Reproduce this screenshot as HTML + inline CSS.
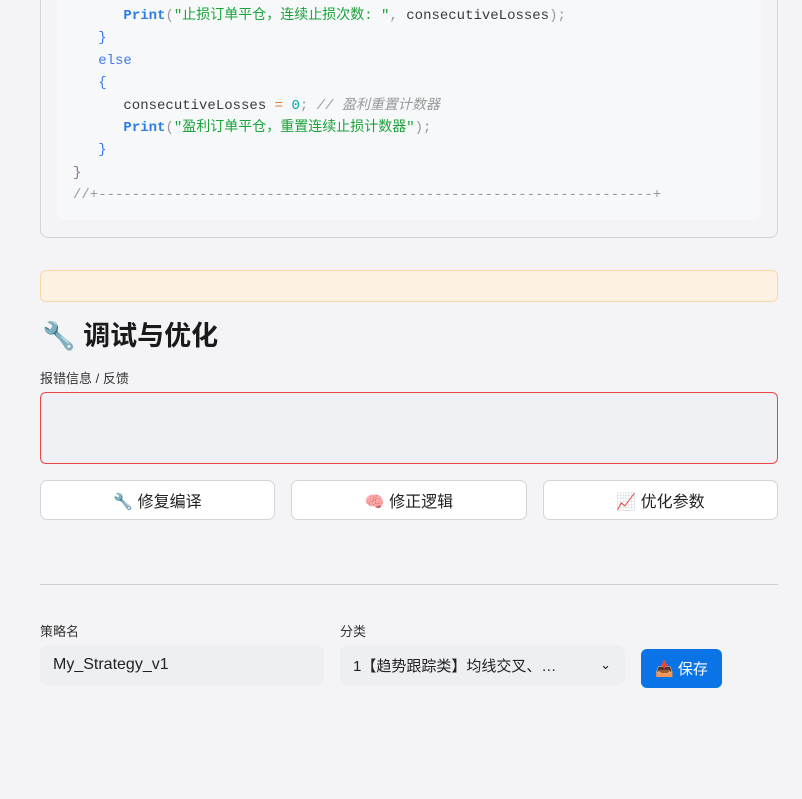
<!DOCTYPE html>
<html><head><meta charset="utf-8"><style>
body{margin:0;background:#f4f4f7;font-family:"Liberation Sans","Noto Sans CJK SC",sans-serif;color:#222;width:802px;height:799px;overflow:hidden;position:relative}
.card{position:absolute;left:40px;top:-20px;width:736px;height:257px;border:1px solid #d4d4d8;border-top:none;border-radius:0 0 8px 8px;background:#f4f4f6}
.pre{position:absolute;left:16px;top:0;width:704px;height:240px;background:#f6f8fa;border-radius:0 0 8px 8px}
.code{position:absolute;left:16px;margin:0;font-family:"Liberation Mono","Noto Sans CJK SC",monospace;font-size:14px;line-height:22.4px;color:#383a42;white-space:pre}
.k{color:#4078f2}.f{color:#2f7de1;font-weight:bold}.s{color:#1aa33a}.p{color:#999}.n{color:#0aa}.o{color:#e37b2b}.c{color:#999;font-style:italic}.b{color:#8a6d9a}
.warn{position:absolute;left:40px;top:270px;width:736px;height:30px;background:#fdf1e3;border:1px solid #f9d6a6;border-radius:6px}
h2{position:absolute;left:42px;top:314px;margin:0;font-size:27px;font-weight:bold;color:#1a1a1a}
.lbl{position:absolute;font-size:13px;color:#333}
.ta{position:absolute;left:40px;top:392px;width:736px;height:70px;background:#f0f1f5;border:1px solid #ef4444;border-radius:6px}
.btn{position:absolute;top:480px;height:38px;background:#fff;border:1px solid #d4d4d8;border-radius:7px;font-size:16px;display:flex;align-items:center;justify-content:center;color:#222}
.hr{position:absolute;left:40px;top:584px;width:738px;height:1px;background:#d0d0d4}
.inp{position:absolute;top:645px;height:40px;background:#eeeff3;border-radius:7px;font-size:16px;display:flex;align-items:center;box-sizing:border-box;padding-left:13px;color:#222}
.save{position:absolute;left:641px;top:649px;width:81px;height:39px;background:#0a74e6;border-radius:6px;color:#fff;font-size:15px;display:flex;align-items:center;justify-content:center}
</style></head><body>
<div class="card"><div class="pre">
<pre class="code" style="top:25px">      <span class="f">Print</span><span class="p">(</span><span class="s">"止损订单平仓，连续止损次数: "</span><span class="p">,</span> consecutiveLosses<span class="p">);</span>
   <span class="k">}</span>
   <span class="k">else</span>
   <span class="k">{</span>
      consecutiveLosses <span class="o">=</span> <span class="n">0</span><span class="p">;</span> <span class="c">// 盈利重置计数器</span>
      <span class="f">Print</span><span class="p">(</span><span class="s">"盈利订单平仓，重置连续止损计数器"</span><span class="p">);</span>
   <span class="k">}</span>
<span class="b">}</span>
<span class="p">//+------------------------------------------------------------------+</span></pre>
</div></div>
<div class="warn"></div>
<h2>🔧 调试与优化</h2>
<div class="lbl" style="left:40px;top:368px">报错信息 / 反馈</div>
<div class="ta"></div>
<div class="btn" style="left:40px;width:233px">🔧 修复编译</div>
<div class="btn" style="left:291px;width:234px">🧠 修正逻辑</div>
<div class="btn" style="left:543px;width:233px">📈 优化参数</div>
<div class="hr"></div>
<div class="lbl" style="left:40px;top:621px">策略名</div>
<div class="lbl" style="left:340px;top:621px">分类</div>
<div class="inp" style="left:40px;width:284px">My_Strategy_v1</div>
<div class="inp" style="left:340px;width:285px;font-size:15px">1【趋势跟踪类】均线交叉、…<span style="position:absolute;right:14px;font-size:13px">⌄</span></div>
<div class="save">📥 保存</div>
</body></html>
